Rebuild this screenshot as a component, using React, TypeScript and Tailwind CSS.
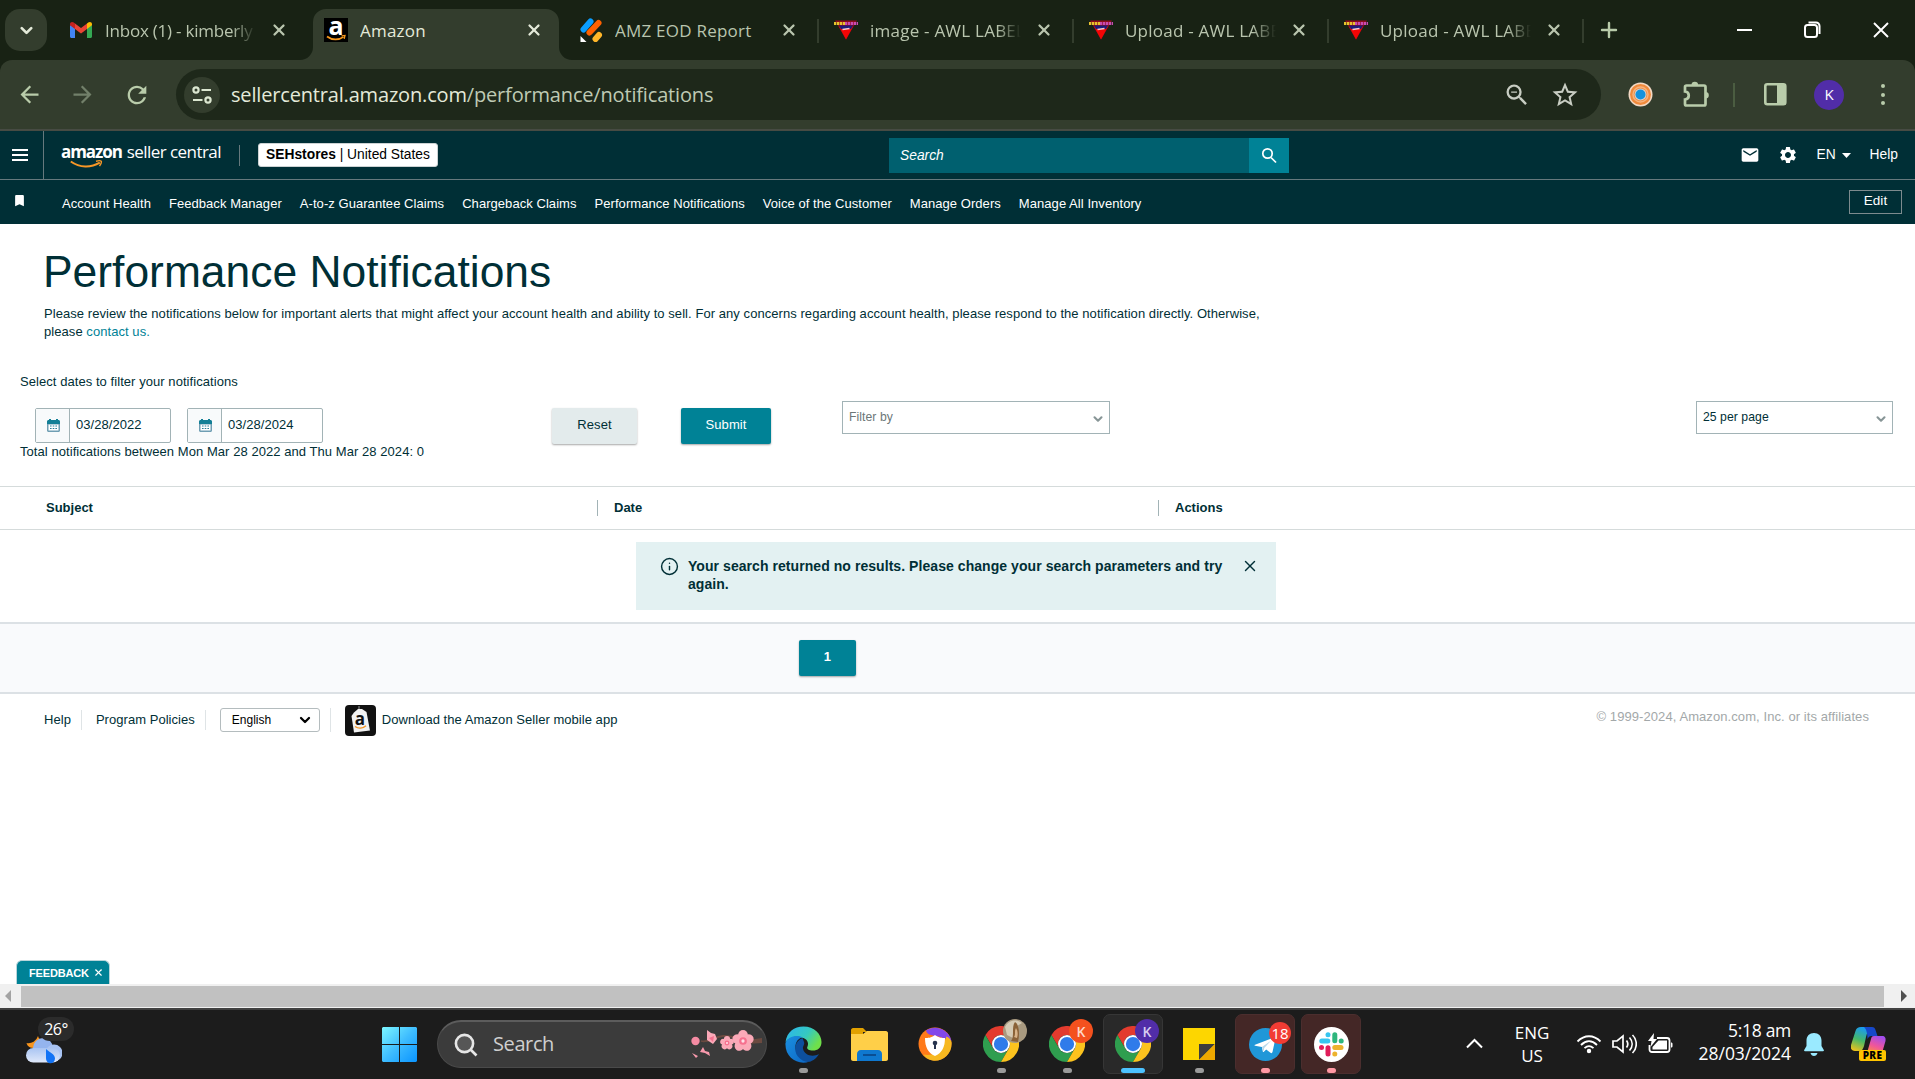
import type { ReactNode } from "react";
import { ChevronDown, Info, Plus, X } from "lucide-react";
import {
  MdArrowBack,
  MdArrowForward,
  MdBookmark,
  MdEmail,
  MdRefresh,
  MdSettings,
  MdStarOutline,
  MdZoomOut,
} from "react-icons/md";

function GmailIcon() {
  return (
    <svg width="22" height="16" viewBox="0 0 22 16">
      <path d="M0 3v11.5C0 15.3.7 16 1.5 16H5V6z" fill="#4285f4" />
      <path d="M22 3v11.5c0 .8-.7 1.5-1.5 1.5H17V6z" fill="#34a853" />
      <path d="M17 1.5V7l5-3.8V2.2C22 .2 19.8-.6 18.2.6z" fill="#fbbc04" />
      <path d="M5 7V1.4l6 4.6 6-4.6V7l-6 4.6z" fill="#ea4335" />
      <path d="M0 2.2v1L5 7V1.5L3.8.6C2.2-.6 0 .2 0 2.2z" fill="#c5221f" />
    </svg>
  );
}

function AmazonIcon() {
  return (
    <svg width="24" height="24" viewBox="0 0 24 24">
      <rect width="24" height="24" fill="#000" />
      <text x="12" y="16.5" textAnchor="middle" fill="#fff" fontSize="25" fontWeight="700" fontFamily="'Open Sans', sans-serif">
        a
      </text>
      <path d="M3 18.5c5 3.8 12 3.8 16.5.4" stroke="#f7981d" strokeWidth="1.8" fill="none" />
      <path d="M17.5 17.8l3.5-.4-.8 3.5" stroke="#f7981d" strokeWidth="1.3" fill="none" />
    </svg>
  );
}

function JotformIcon() {
  return (
    <svg width="23" height="24" viewBox="0 0 23 24" strokeLinecap="round">
      <path d="M3.5 11.5l7-8" stroke="#0a9dff" strokeWidth="6" />
      <path d="M9.5 14.5l9-9.5" stroke="#ff6100" strokeWidth="6" />
      <path d="M15.5 21l3.5-4" stroke="#ffb629" strokeWidth="6" />
      <path d="M.5 18v6h6z" fill="#fff" />
    </svg>
  );
}

function AwlIcon() {
  return (
    <svg width="24" height="20" viewBox="0 0 24 20">
      <path d="M1 .5h22L12 19.5z" fill="#8c0c1c" />
      <path d="M5 6.500h14L12 19.500z" fill="#f20505" />
      <path d="M5 5.500h14l-2 3.500H7z" fill="#1c1a7a" />
      <path d="M0 3.500h11" stroke="#e8c22e" strokeWidth="3.200" strokeDasharray="2.300 .6" />
      <path d="M11 3.500h13" stroke="#c94bb0" strokeWidth="3.200" strokeDasharray="2.300 .6" />
      <path d="M8.500 9.500l7-1" stroke="#f5c9d0" strokeWidth="1.600" />
    </svg>
  );
}

interface Tab {
  title: string;
  icon: ReactNode;
  active?: boolean;
  faded?: boolean;
  divider?: boolean;
  tracking?: string;
}

const TABS: Tab[] = [
  { title: "Inbox (1) - kimberly", icon: <GmailIcon />, faded: true, tracking: "tracking-[-0.220px]" },
  { title: "Amazon", icon: <AmazonIcon />, active: true },
  { title: "AMZ EOD Report", icon: <JotformIcon />, divider: true },
  { title: "image - AWL LABEL", icon: <AwlIcon />, faded: true, divider: true },
  { title: "Upload - AWL LABE", icon: <AwlIcon />, faded: true, divider: true },
  { title: "Upload - AWL LABE", icon: <AwlIcon />, faded: true, divider: true },
];

function BrowserTab({ title, icon, active, faded, divider, tracking = "tracking-[0.230px]" }: Tab) {
  return (
    <div
      className={`relative flex h-[51px] w-[255px] shrink-0 items-start pt-[9px] pl-4 ${
        active ? "text-[#e4ead9]" : "text-[#b9c5ae]"
      }`}
    >
      {active && (
        <svg className="absolute top-0 -left-[8px]" width="272" height="51" viewBox="0 0 272 51">
          <path
            d="M0 51a13 13 0 0 0 13-13V13A13 13 0 0 1 26 0H246a13 13 0 0 1 13 13V38a13 13 0 0 0 13 13z"
            fill="#333d2d"
          />
        </svg>
      )}
      <div className="relative flex h-6 w-6 items-center justify-center">{icon}</div>
      <div
        className={`relative ml-3 w-[151px] overflow-hidden text-[17px] leading-[26px] whitespace-nowrap ${tracking} ${
          faded ? "[mask-image:linear-gradient(to_right,black_84%,transparent)]" : ""
        }`}
      >
        {title}
      </div>
      <X className="relative ml-[14px] mt-[3px]" size={18} strokeWidth={3} />
      {divider && <div className="absolute top-[10px] right-[-1px] h-6 w-0.5 bg-[#333d2d]" />}
    </div>
  );
}

function BrowserChrome() {
  return (
    <header className="bg-[#182214] font-['Open_Sans',sans-serif]">
      <div className="flex h-[60px] items-end">
        <button className="mr-[6px] mb-[9px] ml-[5px] flex h-[42px] w-[42px] items-center justify-center rounded-[15px] bg-[#333d2d] text-[#e4ead9]">
          <ChevronDown size={19} strokeWidth={3.4} />
        </button>
        {TABS.map((tab, i) => (
          <BrowserTab key={i} {...tab} />
        ))}
        <Plus className="mb-[18px] ml-[14px] text-[#b9ccaa]" size={24} strokeWidth={2.4} />
        <div className="mb-[22px] ml-auto flex items-center text-white">
          <div className="mr-[52px] h-0.5 w-[15px] bg-white" />
          <svg className="mr-[52px]" width="17" height="17" viewBox="0 0 17 17" fill="none" stroke="white" strokeWidth="2">
            <rect x="1" y="4" width="12" height="12" rx="2.5" />
            <path d="M4.5 1.5h7.5a3.500 3.500 0 0 1 3.500 3.500v8" />
          </svg>
          <svg className="mr-[26px]" width="16" height="16" viewBox="0 0 16 16" stroke="white" strokeWidth="1.9">
            <path d="M1 1l14 14M15 1L1 15" />
          </svg>
        </div>
      </div>

      <div className="flex h-[71px] items-center rounded-t-[12px] border-b-2 border-[#474b43] bg-[#333d2d] text-[#b9ccaa]">
        <MdArrowBack className="ml-4" size={27} />
        <MdArrowForward className="ml-[26px] text-[#72806a]" size={27} />
        <MdRefresh className="ml-[27px]" size={28} />
        <div className="ml-[25px] flex h-[51px] w-[1425px] items-center rounded-full bg-[#1e281a] pl-2">
          <div className="flex h-9 w-9 items-center justify-center rounded-full bg-[#333d2d]">
            <svg width="20" height="18" viewBox="0 0 20 18" fill="none" stroke="#dce7d1" strokeWidth="2.2">
              <circle cx="4" cy="4" r="2.6" />
              <path d="M9.5 4H19M1 14h9.5" />
              <circle cx="16" cy="14" r="2.6" />
            </svg>
          </div>
          <div className="ml-[11px] text-[20px] tracking-[-0.170px] text-[#e4ead9]">
            sellercentral.amazon.com<span className="text-[#bfcab4]">/performance/notifications</span>
          </div>
          <MdZoomOut className="mr-[19px] ml-auto text-[#c8cdc3]" size={28} />
          <MdStarOutline className="mr-[21px] text-[#c8cdc3]" size={30} />
        </div>
        <svg className="ml-[27px]" width="25" height="25" viewBox="0 0 25 25">
          <circle cx="12.5" cy="12.5" r="12" fill="#f3d9c4" />
          <circle cx="12.5" cy="12.5" r="10.5" fill="#f08a3c" />
          <circle cx="12.5" cy="12.5" r="7.5" fill="none" stroke="#f8b27c" strokeWidth="1.5" />
          <circle cx="12.5" cy="12.5" r="6" fill="#d9d3d0" />
          <circle cx="12.5" cy="12.5" r="5" fill="#1592dc" />
        </svg>
        <svg className="mb-[2px] ml-[30px]" width="26" height="26" viewBox="0 0 26 26">
          <path
            d="M3.5 4.5H21c1 0 1.500.5 1.500 1.500v17c0 1-.5 1.500-1.500 1.500H3.500c-1 0-1.500-.5-1.500-1.500v-4.500c5-.5 5-7.500 0-8V6c0-1 .5-1.500 1.500-1.500z"
            fill="none"
            stroke="#b9ccaa"
            strokeWidth="2.7"
          />
          <path d="M8.500 4a3.300 3.300 0 0 1 6.600 0zM22.500 11a3.300 3.300 0 0 1 0 6.600z" fill="#b9ccaa" />
        </svg>
        <div className="ml-[24px] h-6 w-0.5 bg-[#4b5d41]" />
        <svg className="ml-[29px]" width="23" height="23" viewBox="0 0 23 23">
          <rect x="1.3" y="1.3" width="20" height="20" rx="2" fill="none" stroke="#b9ccaa" strokeWidth="2.6" />
          <path d="M13 1h8.500v21H13z" fill="#b9ccaa" />
        </svg>
        <div className="ml-[27px] flex h-[30px] w-[30px] items-center justify-center rounded-full bg-[#512da8] text-[15px] text-white">
          K
        </div>
        <div className="ml-[37px] flex flex-col gap-[4.5px]">
          <i className="h-1 w-1 rounded-full bg-[#b9ccaa]" />
          <i className="h-1 w-1 rounded-full bg-[#b9ccaa]" />
          <i className="h-1 w-1 rounded-full bg-[#b9ccaa]" />
        </div>
      </div>
    </header>
  );
}

const NAV_LINKS = [
  "Account Health",
  "Feedback Manager",
  "A-to-z Guarantee Claims",
  "Chargeback Claims",
  "Performance Notifications",
  "Voice of the Customer",
  "Manage Orders",
  "Manage All Inventory",
];

function SellerNav() {
  return (
    <nav className="bg-[#002f36] text-white">
      <div className="flex h-[49px] items-center border-b border-[#66797d]">
        <div className="flex h-12 w-11 items-center border-r border-[#66797d] pl-3">
          <div className="flex flex-col gap-[3px]">
            <i className="h-0.5 w-4 bg-white" />
            <i className="h-0.5 w-4 bg-white" />
            <i className="h-0.5 w-4 bg-white" />
          </div>
        </div>
        <div className="relative ml-[17px] flex h-[30px] w-[160px] items-start font-['Open_Sans',sans-serif] text-[17px] leading-[24px] whitespace-nowrap">
          <span className="w-[66px] font-bold tracking-[-1.050px]">amazon</span>
          <span className="tracking-[-0.550px]">seller central</span>
          <svg className="absolute top-[20px] left-[9px]" width="34" height="9" viewBox="0 0 34 9" fill="none" stroke="#f79727">
            <path d="M.8 1.500c9 6.500 20 6.500 29 1.200" strokeWidth="2" />
            <path d="M26 1.200c2.500-.6 4.500-.8 5.200 0 .6.900-.3 3-1.700 5" strokeWidth="1.400" />
          </svg>
        </div>
        <div className="ml-[18px] h-[21px] w-px bg-[#66797d]" />
        <div className="ml-[18px] flex h-6 w-[180px] items-center justify-center rounded-[3px] border border-[#ccd2d3] bg-white pt-px text-[13.8px] whitespace-pre text-black">
          <b>SEHstores</b> | United States
        </div>
        <div className="ml-[451px] flex h-[35px] w-[400px] bg-[#00606f]">
          <span className="flex-1 pl-[11px] text-[13.8px] leading-[35px] italic">Search</span>
          <button className="flex w-10 items-center justify-center bg-[#008296]">
            <svg width="16" height="17" viewBox="0 0 16 17" fill="none" stroke="white" strokeWidth="1.7">
              <circle cx="6.5" cy="6.5" r="4.7" />
              <path d="M10 10.500l5 5" />
            </svg>
          </button>
        </div>
        <MdEmail className="ml-auto" size={20} />
        <MdSettings className="ml-[18px]" size={20} />
        <span className="ml-[18px] text-[13.8px]">EN</span>
        <svg className="ml-[6px]" width="9" height="5" viewBox="0 0 9 5">
          <path d="M0 0h9L4.500 5z" fill="white" />
        </svg>
        <span className="mr-[17px] ml-[19px] text-[13.8px]">Help</span>
      </div>
      <div className="flex h-11 items-center text-[13px] tracking-[0.055px]">
        <MdBookmark className="mb-[3px] ml-3 shrink-0" size={15} />
        <div className="ml-[35px] flex gap-[18px] pt-[3px]">
          {NAV_LINKS.map((label) => (
            <a key={label} className="whitespace-nowrap">
              {label}
            </a>
          ))}
        </div>
        <button className="mr-[13px] ml-auto h-6 w-[53px] border border-[#7d8b8e] pb-px text-[13.5px]">Edit</button>
      </div>
    </nav>
  );
}

function DateInput({ value }: { value: string }) {
  return (
    <div className="flex h-[35px] w-[136px] items-center rounded-[2px] border border-[#a2b3b6] bg-white">
      <div className="flex h-full w-[34px] items-center justify-center border-r border-[#a2b3b6] bg-[#f8fafb] pl-px">
        <svg width="13" height="13" viewBox="0 0 13 13">
          <path d="M0 3h13v8.500c0 .8-.7 1.500-1.500 1.500h-10C.7 13 0 12.300 0 11.500z" fill="#6f9eb3" />
          <path d="M1.500 5.500h10v6h-10z" fill="#fff" />
          <path d="M0 2.500C0 1.700.7 1 1.500 1h10c.8 0 1.500.7 1.500 1.500V5H0zM2 0h2v2H2zM9 0h2v2H9z" fill="#137f96" />
          <path d="M3 7h7M3 9.500h7" stroke="#2b7f99" strokeWidth="1.200" strokeDasharray="1.600 1.100" />
        </svg>
      </div>
      <span className="pb-px pl-[6px] text-[13px]">{value}</span>
    </div>
  );
}

function SelectBox({ label, className }: { label: string; className: string }) {
  return (
    <div className={`flex h-[33px] items-center justify-between border border-[#a2b3b6] bg-white pr-1 pl-[6px] text-[12.2px] ${className}`}>
      <span className="pb-[2px]">{label}</span>
      <ChevronDown className="mt-[3px] text-[#879596]" size={14} strokeWidth={3.6} />
    </div>
  );
}

function Notifications() {
  return (
    <main className="h-[760px] bg-white text-[13px] leading-[18px] tracking-[0.060px] text-[#002f36]">
      <div className="h-[149px] pt-6 pl-11">
        <h1 className="-ml-px text-[44.4px] leading-[48px] tracking-normal">Performance Notifications</h1>
        <p className="mt-[9px] w-[1230px]">
          Please review the notifications below for important alerts that might affect your account health and ability to
          sell. For any concerns regarding account health, please respond to the notification directly. Otherwise, please{" "}
          <a className="text-[#008296]">contact us.</a>
        </p>
      </div>

      <div className="h-[113px] pl-5">
        <p>Select dates to filter your notifications</p>
        <div className="flex h-[52px] items-start pt-[10px]">
          <div className="ml-[15px] flex gap-4 pt-[7px]">
            <DateInput value="03/28/2022" />
            <DateInput value="03/28/2024" />
          </div>
          <button className="mt-[7px] ml-[229px] h-9 w-[85px] rounded-[2px] bg-[#e3ebec] pb-[2px] shadow-[0_1px_2px_rgba(0,0,0,0.35)]">
            Reset
          </button>
          <button className="mt-[7px] ml-[44px] h-9 w-[90px] rounded-[2px] bg-[#008296] pb-[2px] text-white shadow-[0_1px_2px_rgba(0,0,0,0.35)]">
            Submit
          </button>
          <SelectBox label="Filter by" className="ml-[71px] w-[268px] text-[#6c7778]" />
          <SelectBox label="25 per page" className="mr-[22px] ml-auto w-[197px]" />
        </div>
        <p>Total notifications between Mon Mar 28 2022 and Thu Mar 28 2024: 0</p>
      </div>

      <div className="flex h-11 items-center border-y border-[#d5dbdb] pb-px font-bold tracking-normal">
        <div className="w-[597px] pl-[46px]">Subject</div>
        <div className="h-4 w-px bg-[#a2b3b6]" />
        <div className="w-[560px] pl-4">Date</div>
        <div className="h-4 w-px bg-[#a2b3b6]" />
        <div className="pl-4">Actions</div>
      </div>

      <div className="h-[92px] pt-3">
        <div className="ml-[636px] flex h-[68px] w-[640px] bg-[#e3f1f2] pt-[15px] pl-[24px] text-[14px] font-bold">
          <Info size={19} strokeWidth={1.8} />
          <p className="ml-[9px] w-[546px]">
            Your search returned no results. Please change your search parameters and try again.
          </p>
          <X className="ml-[7px]" size={18} strokeWidth={1.9} />
        </div>
      </div>

      <div className="h-[72px] border-y-2 border-[#dce1e5] bg-[#f9fafc] pt-4">
        <button className="ml-[799px] h-9 w-[57px] rounded-[2px] bg-[#008296] pb-[2px] font-bold text-white shadow-[0_1px_2px_rgba(0,0,0,0.35)]">
          1
        </button>
      </div>

      <footer className="flex h-[52px] items-center pl-11 tracking-[0.040px]">
        <span>Help</span>
        <i className="ml-[10px] h-5 w-px bg-[#dfe4e6]" />
        <span className="ml-[14px]">Program Policies</span>
        <i className="ml-[10px] h-5 w-px bg-[#dfe4e6]" />
        <div className="ml-[14px] flex h-6 w-[100px] items-center justify-between rounded-[3px] border border-[#b4bcbe] pr-[6px] pl-[11px] text-[12px] tracking-normal text-black">
          English
          <ChevronDown size={16} strokeWidth={3.4} />
        </div>
        <i className="ml-[10px] h-6 w-px bg-[#dfe4e6]" />
        <svg className="ml-[14px]" width="31" height="31" viewBox="0 0 31 31">
          <rect width="31" height="31" rx="4" fill="#111" />
          <path d="M14 1v5" stroke="#999" />
          <path d="M9 7.500l4-3.500h4l4.500 3 3.500 18.500L9 27.500 6.500 11z" fill="#f2f2f2" />
          <text x="15" y="19.5" textAnchor="middle" fontSize="17" fontWeight="700" fill="#111" fontFamily="'Open Sans', sans-serif">
            a
          </text>
          <path d="M10 21.500c3.500 2.500 8 2 11-.8" stroke="#f79727" strokeWidth="1.500" fill="none" />
        </svg>
        <span className="ml-[6px]">Download the Amazon Seller mobile app</span>
        <span className="mr-[46px] mb-[6px] ml-auto text-[13px] tracking-[0.080px] text-[#a3a8a9]">
          © 1999-2024, Amazon.com, Inc. or its affiliates
        </span>
      </footer>

      <div className="mt-[214px] ml-[16px] flex h-6 w-[94px] items-center rounded-t-[6px] border border-b-0 border-[#b9d5da] bg-[#008296] pl-3 text-[11px] font-bold tracking-[-0.150px] text-white">
        FEEDBACK
        <X className="ml-[4px]" size={11} strokeWidth={2.5} />
      </div>
    </main>
  );
}

function ScrollBar() {
  return (
    <div className="flex h-6 items-center bg-[#f0f0f0]">
      <svg className="ml-[5px]" width="6" height="12" viewBox="0 0 6 12">
        <path d="M6 0v12L0 6z" fill="#a3a3a3" />
      </svg>
      <div className="ml-[10px] h-[21px] w-[1863px] bg-[#c1c1c1]" />
      <svg className="ml-[17px]" width="6" height="12" viewBox="0 0 6 12">
        <path d="M0 0v12l6-6z" fill="#505050" />
      </svg>
    </div>
  );
}

function WeatherIcon() {
  return (
    <svg width="36" height="30" viewBox="0 0 36 30">
      <defs>
        <linearGradient id="cloud" x1="0" y1="0" x2="0" y2="1">
          <stop offset="0" stopColor="#a9c4f2" />
          <stop offset="1" stopColor="#dfe8fa" />
        </linearGradient>
      </defs>
      <path d="M12 2a10 10 0 0 1-11.500 7c1 4 4 5 8 5l8-6c-2-2-4-3.500-4.500-6z" fill="#f7941d" />
      <circle cx="17" cy="14" r="10" fill="#94b4ee" />
      <circle cx="28" cy="19" r="8.5" fill="#a8c3f3" />
      <rect y="14" width="34" height="14.5" rx="7.2" fill="url(#cloud)" />
      <path d="M20 15v9c0 7 9 7 9 .5 0-4.500-5-5.500-9-9.500z" fill="#1273f5" />
    </svg>
  );
}

function WindowsIcon() {
  return (
    <svg width="35" height="35" viewBox="0 0 35 35">
      <defs>
        <linearGradient id="win" gradientUnits="userSpaceOnUse" x1="0" y1="0" x2="35" y2="35">
          <stop offset="0" stopColor="#7cf6ff" />
          <stop offset=".5" stopColor="#3fbdff" />
          <stop offset="1" stopColor="#0a94ff" />
        </linearGradient>
      </defs>
      <path d="M1 0h16v17H0V1zM18 0h16l1 1v16H18zM0 18h17v17H1l-1-1zM18 18h17v16l-1 1H18z" fill="url(#win)" />
    </svg>
  );
}

function Blossom({ x, y, r }: { x: number; y: number; r: number }) {
  return (
    <g transform={`translate(${x} ${y}) scale(${r / 10})`}>
      {[0, 72, 144, 216, 288].map((angle) => (
        <ellipse key={angle} cx="0" cy="-5.5" rx="4.4" ry="4.5" fill="#fba9b8" transform={`rotate(${angle})`} />
      ))}
      <circle r="3.5" fill="#f6718f" />
      <circle r="1.5" fill="#ffe0e8" />
    </g>
  );
}

function BlossomBranch() {
  return (
    <svg width="72" height="32" viewBox="0 0 72 32">
      <path d="M10 12c8 2 12-4 22-5s14 3 22 5" stroke="#6b4a40" strokeWidth="1.8" fill="none" />
      <path d="M54 11.500l17-2.500v5l-17 1z" fill="#6b4a40" />
      <circle cx="4.5" cy="12" r="4.2" fill="#f58ba3" />
      <path d="M16 1l4 3 4 1 2 5-4 5-6-4z" fill="#fba9b8" />
      <path d="M18 9l5-2-1 6z" fill="#f6718f" />
      <path d="M9 23l3-5 2 4 4 1 1 4-5-3zM1 24l6 3-2 2z" fill="#f99aad" />
      <Blossom x={36} y={14} r={7} />
      <Blossom x={52} y={12} r={11} />
    </svg>
  );
}

function EdgeIcon() {
  return (
    <svg width="37" height="37" viewBox="0 0 37 37">
      <defs>
        <linearGradient id="edgeTop" x1="0" y1="0" x2="1" y2=".5">
          <stop offset="0" stopColor="#2bb4f0" />
          <stop offset=".6" stopColor="#35c9c0" />
          <stop offset="1" stopColor="#6fe04a" />
        </linearGradient>
        <linearGradient id="edgeLeft" x1="0" y1="0" x2="1" y2="1">
          <stop offset="0" stopColor="#1b8fe0" />
          <stop offset="1" stopColor="#0c66c4" />
        </linearGradient>
      </defs>
      <path d="M.5 16C2 6 9 .5 18.500.500 29 .5 36.500 8 36.500 16c0 6-4 8.500-8.500 8.500-4 0-7-1.500-5.500-4 1.500-3 0-7-4-8.500C12 10 4 11 .5 16z" fill="url(#edgeTop)" />
      <path d="M.5 17C3 10 12 8.500 17.500 11.500c-5 .5-8.500 7-6.500 13S19 36 24.500 35.500C13 40-.5 31 .5 17z" fill="url(#edgeLeft)" />
      <path d="M17.500 12c-8 3-9 12-5 18 4 5.500 11 7 14 5 3.500-1.500 6-4.500 7.500-7-6 3.500-15 1.500-16-5.500-.4-3 2-3.500 1-6.500z" fill="#0d4f9e" />
    </svg>
  );
}

function FolderIcon() {
  return (
    <svg width="37" height="33" viewBox="0 0 37 33">
      <path d="M0 2c0-1 1-2 2-2h10l4 4h-4v6H0z" fill="#e2a100" />
      <path d="M0 6h12l4-3h19c1 0 2 1 2 2v26c0 1-1 2-2 2H2c-1 0-2-1-2-2z" fill="#ffcf48" />
      <path d="M6 33v-7c0-2 1.500-4 4-4h17c2.500 0 4 2 4 4v7z" fill="#0f78cf" />
      <path d="M12 27h13" stroke="#0a4e93" strokeWidth="2" />
    </svg>
  );
}

function SecureBrowserIcon() {
  return (
    <svg width="34" height="34" viewBox="0 0 34 34">
      <circle cx="17" cy="17" r="16.5" fill="#ff7a1a" />
      <path d="M8 3.500C18-3 31 3 33.500 14L22 10C16 8 9 9 8 3.500z" fill="#8247ea" />
      <path d="M33.500 15c1 12-9 20-19 18.500-5-1-8-4-9-6 9 2 16-3 20-10l3-8c3 1 4 3 5 5.500z" fill="#f6b820" />
      <path d="M17 8c4 3 7 3 10 3 0 9-3 15-10 18C10 26 7 20 7 11c3 0 6 0 10-3z" fill="#fff" />
      <circle cx="17" cy="16" r="2.3" fill="#27344f" />
      <path d="M16 17h2v5h-2z" fill="#27344f" />
    </svg>
  );
}

function ChromeIcon() {
  return (
    <svg width="36" height="36" viewBox="0 0 48 48">
      <path d="M24 12H44.800A24 24 0 0 0 3.200 12L13.600 30A12 12 0 0 1 24 12z" fill="#e33b2e" />
      <path d="M13.600 30L3.200 12A24 24 0 0 0 24 48L34.400 30A12 12 0 0 1 13.600 30z" fill="#2f9e4f" />
      <path d="M34.400 30L24 48A24 24 0 0 0 44.800 12H24A12 12 0 0 1 34.400 30z" fill="#fcc31e" />
      <circle cx="24" cy="24" r="12" fill="#fff" />
      <circle cx="24" cy="24" r="9.5" fill="#2f7bea" />
    </svg>
  );
}

function StickyNotesIcon() {
  return (
    <svg width="32" height="32" viewBox="0 0 32 32">
      <path d="M0 0h32v32H0z" fill="#fdd600" />
      <path d="M16 16h16L16 32z" fill="#3d3d3d" />
      <path d="M32 16v16H16z" fill="#eda800" />
    </svg>
  );
}

function TelegramIcon() {
  return (
    <svg width="33" height="33" viewBox="0 0 33 33">
      <circle cx="16.5" cy="16.5" r="16.5" fill="#2097d8" />
      <path d="M6 16.800L25 9.500c1-.3 1.600.3 1.300 1.600L23.500 24c-.3 1.200-1.200 1.400-2 .8l-4.300-3.300-2.300 2.300c-.5.400-1 .3-1.100-.3l-.9-4.600L6 17.800c-.7-.3-.7-.7 0-1z" fill="#fff" />
      <path d="M13 18.900l9.500-6.600-7.300 7.700-.5 3.500z" fill="#b8d8ea" />
    </svg>
  );
}

function SlackIcon() {
  return (
    <svg width="35" height="35" viewBox="0 0 35 35" strokeWidth="5" strokeLinecap="round">
      <circle cx="17.5" cy="17.5" r="17.5" fill="#fff" />
      <path d="M7.800 14h6" stroke="#36c5f0" />
      <path d="M14 7.700v.01" stroke="#36c5f0" />
      <path d="M20.800 7.800v6" stroke="#2eb67d" />
      <path d="M27.200 14h.01" stroke="#2eb67d" />
      <path d="M20.800 20.500h6.200" stroke="#ecb22e" />
      <path d="M20.800 27v.01" stroke="#ecb22e" />
      <path d="M14 20.800v6.200" stroke="#e01e5a" />
      <path d="M7.500 20.500h.01" stroke="#e01e5a" />
    </svg>
  );
}

interface TaskItem {
  icon: ReactNode;
  badge?: ReactNode;
  tile?: string;
  indicator?: string;
}

const badgeBase = "absolute flex items-center justify-center rounded-full";

const TASKS: TaskItem[] = [
  { icon: <EdgeIcon />, indicator: "w-[9px] bg-[#9a9a9a]" },
  { icon: <FolderIcon /> },
  { icon: <SecureBrowserIcon /> },
  {
    icon: <ChromeIcon />,
    indicator: "w-[9px] bg-[#9a9a9a]",
    badge: (
      <svg className="absolute top-[4px] left-[31px]" width="24" height="24" viewBox="0 0 24 24">
        <circle cx="12" cy="12" r="12" fill="#a99a80" />
        <path d="M2 8c3-6 10-9 17-4l-5 3-4 12-6-3z" fill="#d5cbb5" />
        <path d="M12 3c4 2 5 12 3 20l-7-1c4-5 0-14 4-19z" fill="#8a6238" />
        <path d="M13 9c2 3 2 7 1 10l-3-1c2-3 0-6 2-9z" fill="#d9b489" />
      </svg>
    ),
  },
  {
    icon: <ChromeIcon />,
    indicator: "w-[9px] bg-[#9a9a9a]",
    badge: <div className={`${badgeBase} top-[4px] left-[31px] h-6 w-6 bg-[#f4511e] text-[14px] font-semibold text-[#ffd8c8]`}>K</div>,
  },
  {
    icon: <ChromeIcon />,
    tile: "bg-[#292929] border-[#363636]",
    indicator: "w-6 bg-[#4cc2ff]",
    badge: <div className={`${badgeBase} top-[4px] left-[31px] h-6 w-6 bg-[#512da8] text-[14px] font-semibold text-[#d8cdf0]`}>K</div>,
  },
  { icon: <StickyNotesIcon />, indicator: "w-[9px] bg-[#9a9a9a]" },
  {
    icon: <TelegramIcon />,
    tile: "bg-[#442726] border-[#4b2e2e]",
    indicator: "w-[9px] bg-[#ff99a4]",
    badge: <div className={`${badgeBase} top-[7px] left-[33px] h-[22px] w-[22px] bg-[#f23c34] text-[15px] text-white`}>18</div>,
  },
  { icon: <SlackIcon />, tile: "bg-[#442726] border-[#4b2e2e]", indicator: "w-[9px] bg-[#ff99a4]" },
];

function Taskbar() {
  return (
    <div className="flex h-[71px] items-center border-t-2 border-[#414141] bg-[#1c1c1c] pb-px font-['Open_Sans',sans-serif] text-white">
      <div className="relative ml-[26px] w-[48px] pt-[9px]">
        <WeatherIcon />
        <span className="absolute -top-[8px] left-[12px] h-6 w-9 rounded-full bg-[#2b2b2b] text-center text-[16px] leading-6 tracking-[-0.5px]">
          26°
        </span>
      </div>
      <div className="ml-[308px]">
        <WindowsIcon />
      </div>
      <div className="ml-5 flex h-12 w-[330px] items-center rounded-full border border-t-2 border-[#4a4a4a] border-t-[#5c5c5c] bg-[#3b3b3b]">
        <svg className="ml-[16px]" width="24" height="24" viewBox="0 0 24 24" fill="none" stroke="#e6e6e6" strokeWidth="2.6">
          <circle cx="10.5" cy="10.5" r="8.6" fill="#565656" />
          <path d="M17 17l5.500 5.500" />
        </svg>
        <span className="ml-[15px] pb-px text-[20px] tracking-[-0.4px] text-[#cfcfcf]">Search</span>
        <div className="mr-[3px] ml-auto">
          <BlossomBranch />
        </div>
      </div>
      <div className="ml-[6px] flex gap-[6px]">
        {TASKS.map(({ icon, badge, tile, indicator }, i) => (
          <div
            key={i}
            className={`relative flex h-[60px] w-[60px] items-center justify-center rounded-[7px] border ${
              tile ?? "border-transparent"
            }`}
          >
            {icon}
            {badge}
            {indicator && <i className={`absolute bottom-0 h-[5px] rounded-full ${indicator}`} />}
          </div>
        ))}
      </div>

      <svg className="mb-px ml-auto" width="17" height="11" viewBox="0 0 17 11" fill="none" stroke="white" strokeWidth="2">
        <path d="M1 9.500l7.500-7.500L16 9.500" />
      </svg>
      <div className="ml-[31px] w-[36px] pb-px text-center text-[17px] leading-[23px] tracking-[-0.1px]">
        ENG
        <br />
        US
      </div>
      <svg className="ml-[26px]" width="26" height="20" viewBox="0 0 26 20" fill="none" stroke="white" strokeWidth="1.8">
        <path d="M1.500 7.500c7-7 16-7 23 0M5 11c5-5 11-5 16 0M8.500 14.200c3-2.800 6-2.800 9 0" />
        <circle cx="13" cy="17" r="1.3" fill="white" />
      </svg>
      <svg className="ml-[10px]" width="25" height="22" viewBox="0 0 25 22" fill="none" stroke="white" strokeWidth="1.7">
        <path d="M1 8v6h4l6 5V3L5 8zM14.500 7.500c1.500 2 1.500 5 0 7M17.500 4.500c3.500 4 3.500 9 0 13M20.500 2c5 5 5 13 0 18" />
      </svg>
      <svg className="ml-[11px]" width="25" height="22" viewBox="0 0 25 22">
        <path d="M9 5h10c1.500 0 2.500 1 2.500 2.500v9c0 1.500-1 2.500-2.500 2.500H4c-1.500 0-2.500-1-2.500-2.500V12" fill="none" stroke="white" strokeWidth="1.8" />
        <path d="M10.500 7.500h8.500v9H4.500V14z" fill="white" />
        <path d="M23 9.500c1 0 1.500.5 1.500 1.500v2c0 1-.5 1.500-1.500 1.500z" fill="white" />
        <path d="M6 0L0 8h3.500L2.500 14 9 6H5.500z" fill="white" />
      </svg>
      <div className="ml-[25px] w-[93px] pb-[4px] text-right text-[17.5px] leading-[23px] tracking-[-0.050px] whitespace-nowrap">
        <span className="tracking-[-0.3px]">5:18 am</span>
        <br />
        28/03/2024
      </div>
      <svg className="ml-[13px]" width="20" height="23" viewBox="0 0 20 23" fill="#9aeaff">
        <path d="M10 0c4.500 0 7.500 3 7.500 7.500V13l2.300 4c.3.700 0 1.300-.8 1.300H1c-.8 0-1.100-.6-.8-1.300l2.300-4V7.500C2.500 3 5.500 0 10 0zM6.500 20h7c-.5 1.800-1.800 3-3.500 3s-3-1.200-3.500-3z" />
      </svg>
      <div className="relative mr-[29px] ml-[27px] h-[34px] w-[35px]">
        <svg width="35" height="34" viewBox="0 0 35 34">
          <defs>
            <linearGradient id="copA" x1=".5" y1="0" x2=".2" y2="1">
              <stop offset="0" stopColor="#1a9bf0" />
              <stop offset=".5" stopColor="#45b86a" />
              <stop offset="1" stopColor="#f2c21a" />
            </linearGradient>
            <linearGradient id="copB" x1=".7" y1="0" x2=".3" y2="1">
              <stop offset="0" stopColor="#a04df0" />
              <stop offset=".6" stopColor="#f0569a" />
              <stop offset="1" stopColor="#f98a4a" />
            </linearGradient>
          </defs>
          <path d="M10 0h9c-2 3-3 6-4 10l-2 9c-1 3-2 5-5 5H4c-3 0-5-2-4-6L4.500 4C5.500 1 7 0 10 0z" fill="url(#copA)" />
          <path d="M13 0h8c2 0 3 1 3.500 3l2 6h-6c-2 0-3 1-4 3 0-5-1-10-3.500-12z" fill="#1748c9" />
          <path d="M23 9h8c3 0 4 2 3.500 5L31 26H16l4-14c.5-2 1-3 3-3z" fill="url(#copB)" />
        </svg>
        <span className="absolute bottom-0 left-[8px] h-[11px] w-[27px] rounded-[2px] bg-[#ffc400] text-center text-[10px] leading-[11px] font-extrabold tracking-[0.3px] text-black">
          PRE
        </span>
      </div>
    </div>
  );
}

export default function App() {
  return (
    <div className="h-[1079px] w-[1915px] overflow-hidden bg-white font-['Liberation_Sans',Arial,sans-serif]">
      <BrowserChrome />
      <SellerNav />
      <Notifications />
      <ScrollBar />
      <Taskbar />
    </div>
  );
}
